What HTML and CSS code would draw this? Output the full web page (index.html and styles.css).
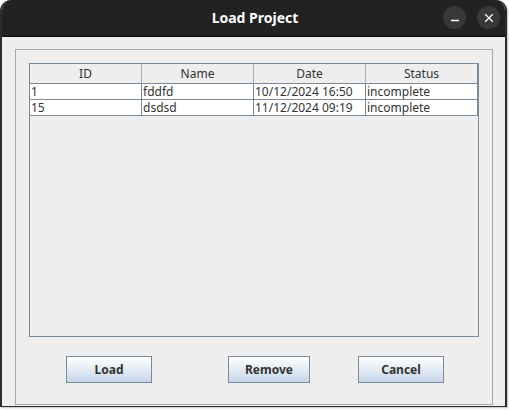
FILE: index.html
```html
<!DOCTYPE html>
<html>
<head>
<meta charset="utf-8">
<link rel="stylesheet" href="styles.css">
</head>
<body>
<div class="window">
  <div class="titlebar">
    <span class="title">Load Project</span>
    <div class="controls">
      <span class="ctl"><svg width="10" height="10" viewBox="0 0 10 10"><path d="M1 7.5H9" stroke="#fff" stroke-width="1.3"/></svg></span>
      <span class="ctl"><svg width="10" height="10" viewBox="0 0 10 10"><path d="M1.2 1.2L8.8 8.8M8.8 1.2L1.2 8.8" stroke="#fff" stroke-width="1.3"/></svg></span>
    </div>
  </div>
  <div class="content">
    <div class="panel">
      <div class="scroll">
        <div class="grid head">
          <div class="hc">ID</div><div class="hc">Name</div><div class="hc">Date</div><div class="hc">Status</div>
        </div>
        <div class="grid row">
          <div class="c">1</div><div class="c">fddfd</div><div class="c">10/12/2024 16:50</div><div class="c">incomplete</div>
        </div>
        <div class="grid row">
          <div class="c">15</div><div class="c">dsdsd</div><div class="c">11/12/2024 09:19</div><div class="c">incomplete</div>
        </div>
      </div>
      <div class="buttons">
        <button class="btn load">Load</button>
        <button class="btn remove">Remove</button>
        <button class="btn cancel">Cancel</button>
      </div>
    </div>
  </div>
</div>
</body>
</html>
```
FILE: styles.css
```css
html, body { margin: 0; padding: 0; }
body {
  background: #ffffff;
  width: 509px;
  height: 410px;
  overflow: hidden;
  font-family: "Noto Sans", "DejaVu Sans", sans-serif;
}
.window {
  width: 503px;
  height: 406px;
  border-left: 2px solid #2c2c2c;
  border-right: 2px solid #2c2c2c;
  border-bottom: 1px solid #2c2c2c;
  border-radius: 11px 11px 0 0;
  background: #eeeeee;
  box-shadow: 1px 1px 2px rgba(0,0,0,0.25);
  overflow: hidden;
  display: flex;
  flex-direction: column;
}
.titlebar {
  height: 36px;
  background: #222222;
  border-bottom: 1px solid #0a0a0a;
  position: relative;
  display: flex;
  align-items: center;
  justify-content: center;
  flex: none;
}
.title {
  color: #ffffff;
  font-weight: bold;
  font-size: 14px;
  margin-left: 3px;
  margin-top: -1px;
}
.controls {
  position: absolute;
  right: 5px;
  top: 6px;
  display: flex;
  gap: 11px;
}
.ctl {
  width: 23px;
  height: 23px;
  border-radius: 50%;
  background: #383838;
  display: flex;
  align-items: center;
  justify-content: center;
}
.content {
  flex: 1;
  padding: 12px 12px 1px 13px;
  display: flex;
}
.panel {
  flex: 1;
  border: 1px solid #a9a9a9;
  padding: 13px 12px 0 13px;
  display: flex;
  flex-direction: column;
}
.scroll {
  width: 448px;
  height: 272px;
  border: 1px solid #7a8a99;
  background: #eeeeee;
}
.grid {
  display: grid;
  grid-template-columns: 112px 112px 112px 112px;
}
.hc {
  height: 19px;
  border-right: 1px solid #a4afba;
  border-bottom: 1px solid #7a8a99;
  text-align: center;
  font-size: 12px;
  line-height: 20px;
  color: #333333;
  background: #eeeeee;
}
.hc:last-child { border-right: 1px solid #7a8a99; }
.c {
  height: 15px;
  background: #ffffff;
  border-right: 1px solid #7a8a99;
  border-bottom: 1px solid #7a8a99;
  font-size: 12px;
  line-height: 15px;
  color: #333333;
  padding-left: 1px;
  white-space: nowrap;
  overflow: hidden;
}
.buttons {
  display: flex;
  margin-top: 19px;
  padding-left: 37px;
}
.btn {
  height: 27px;
  border: 1px solid #7a8a99;
  background: linear-gradient(#ffffff 0%, #eef3f9 30%, #c6d7ea 100%);
  font-family: "Noto Sans", "DejaVu Sans", sans-serif;
  font-weight: bold;
  font-size: 12px;
  color: #333333;
  padding: 0;
  margin: 0;
}
.load { width: 86px; margin-right: 76px; }
.remove { width: 82px; margin-right: 48px; }
.cancel { width: 86px; }
```
